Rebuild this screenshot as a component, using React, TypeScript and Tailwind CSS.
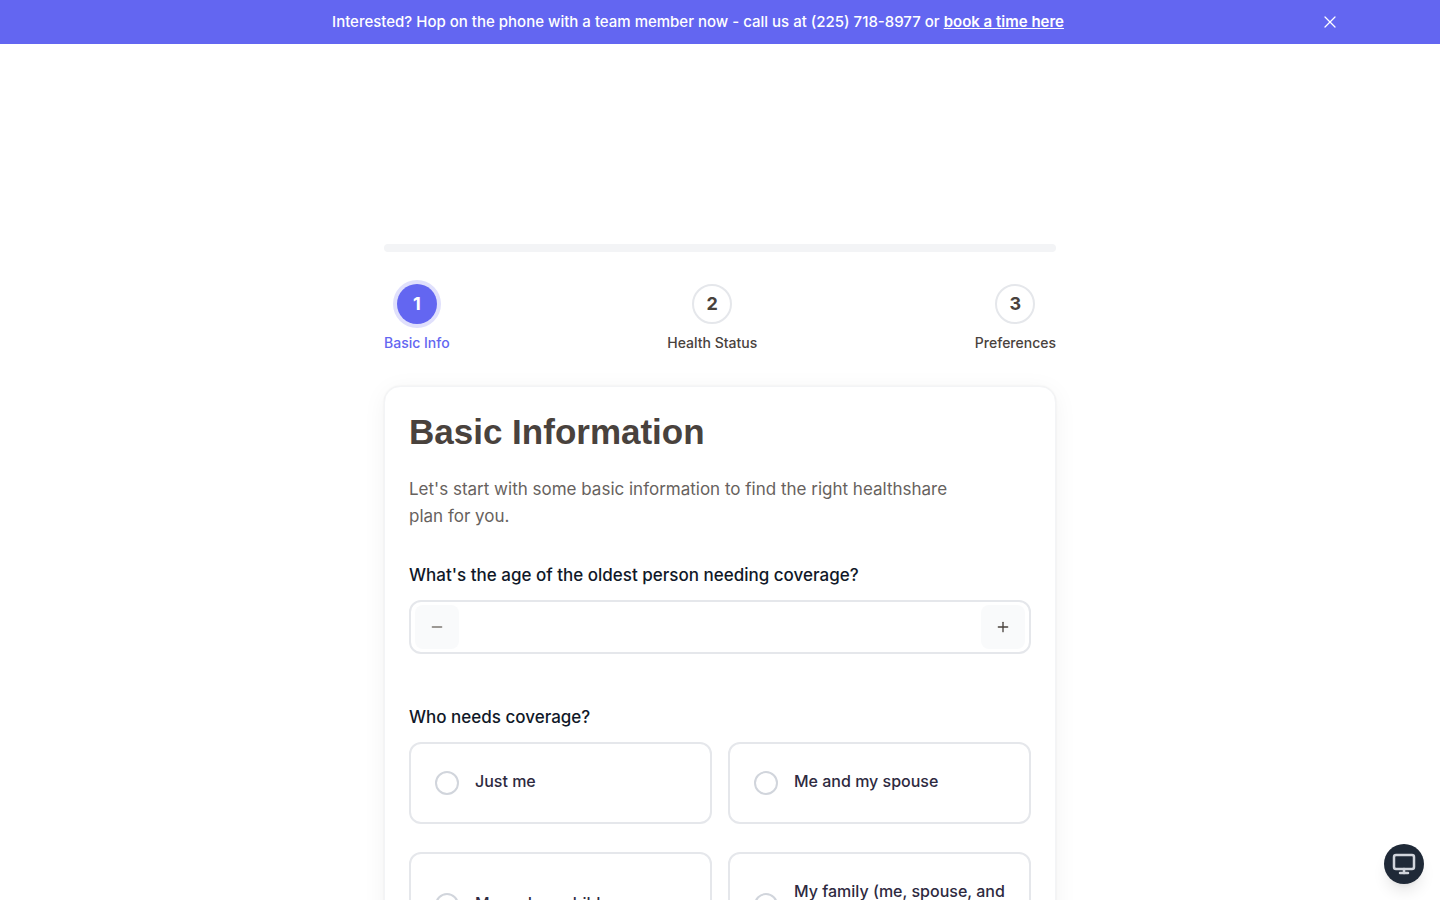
import { useState } from "react";
import { Minus, Plus, X, Monitor } from "lucide-react";

const steps = ["Basic Info", "Health Status", "Preferences"];

const coverageOptions = [
  "Just me",
  "Me and my spouse",
  "Me and my children",
  "My family (me, spouse, and children)",
];

function Banner({ onClose }: { onClose: () => void }) {
  return (
    <div className="flex h-11 items-center bg-[#6366f1] px-20 text-white">
      <p className="flex-1 text-center text-[15px] leading-6 font-medium">
        Interested? Hop on the phone with a team member now - call us at (225) 718-8977 or{" "}
        <a href="#book" className="font-semibold underline">
          book a time here
        </a>
      </p>
      <button type="button" aria-label="Dismiss" onClick={onClose} className="mr-4 p-1">
        <X size={20} strokeWidth={1.5} />
      </button>
    </div>
  );
}

function Stepper({ current }: { current: number }) {
  return (
    <>
      <div className="h-2 rounded-full bg-gray-100" />
      <ol className="mt-8 flex justify-between">
        {steps.map((name, i) => (
          <li key={name} className="flex flex-col items-center gap-2">
            <span
              className={
                i === current
                  ? "flex size-10 items-center justify-center rounded-full bg-[#6366f1] text-lg font-bold text-white ring-4 ring-[#e0e0fc]"
                  : "flex size-10 items-center justify-center rounded-full border-2 border-gray-200 bg-white text-lg font-bold text-[#49423d]"
              }
            >
              {i + 1}
            </span>
            <span
              className={
                i === current
                  ? "text-[14px] leading-[22px] font-medium text-[#6366f1]"
                  : "text-[14px] leading-[22px] font-medium text-[#49423d]"
              }
            >
              {name}
            </span>
          </li>
        ))}
      </ol>
    </>
  );
}

function AgeField() {
  const [age, setAge] = useState("");
  const step = (delta: number) => setAge(String(Math.max(0, Number(age) + delta)));
  const buttonClass =
    "flex size-11 shrink-0 items-center justify-center rounded-lg bg-gray-50 text-[#49423d] disabled:text-[#7d7873]";
  return (
    <div>
      <label htmlFor="age" className="block text-[17px] leading-7 font-medium text-gray-900">
        What's the age of the oldest person needing coverage?
      </label>
      <div className="mt-[11px] flex h-[54px] items-center rounded-xl border-2 border-gray-200 px-1">
        <button
          type="button"
          aria-label="Decrease age"
          disabled={!age}
          onClick={() => step(-1)}
          className={buttonClass}
        >
          <Minus size={16} strokeWidth={2} />
        </button>
        <input
          id="age"
          inputMode="numeric"
          value={age}
          onChange={(e) => setAge(e.target.value)}
          className="h-full min-w-0 flex-1 text-center text-lg outline-none"
        />
        <button type="button" aria-label="Increase age" onClick={() => step(1)} className={buttonClass}>
          <Plus size={16} strokeWidth={2} />
        </button>
      </div>
    </div>
  );
}

function CoverageField() {
  return (
    <fieldset className="mt-[49px]">
      <legend className="text-[17px] leading-7 font-medium text-gray-900">Who needs coverage?</legend>
      <div className="mt-[11px] grid grid-cols-2 gap-x-4 gap-y-7">
        {coverageOptions.map((option) => (
          <label
            key={option}
            className="flex cursor-pointer items-center gap-4 rounded-xl border-2 border-gray-200 px-6 py-6"
          >
            <input
              type="radio"
              name="coverage"
              value={option}
              className="size-6 shrink-0 appearance-none rounded-full border-2 border-gray-300 bg-white checked:border-8 checked:border-[#6366f1]"
            />
            <span className="pt-px pb-[5px] text-[16px] leading-6 font-medium text-[#2e2a3f]">
              {option}
            </span>
          </label>
        ))}
      </div>
    </fieldset>
  );
}

export default function App() {
  const [bannerOpen, setBannerOpen] = useState(true);
  return (
    <div className="min-h-screen bg-white font-['Inter',sans-serif]">
      {bannerOpen && <Banner onClose={() => setBannerOpen(false)} />}
      <main className="mx-auto max-w-2xl pt-50 pb-12">
        <Stepper current={0} />
        <section className="mt-8 rounded-2xl border border-gray-100 bg-white p-6 shadow-[0_0_2px_rgba(0,0,0,0.08),0_4px_24px_rgba(0,0,0,0.05)]">
          <h1 className="font-['Liberation_Sans',sans-serif] text-[35px] leading-[42px] font-bold text-[#49423d]">
            Basic Information
          </h1>
          <p className="mt-[23px] mb-[31px] max-w-xl text-[17px] leading-[27px] text-[#67625e]">
            Let's start with some basic information to find the right healthshare plan for you.
          </p>
          <AgeField />
          <CoverageField />
        </section>
      </main>
      <button
        type="button"
        aria-label="Open display options"
        className="fixed right-4 bottom-4 flex size-10 items-center justify-center rounded-full bg-[#1f2937] text-gray-300 shadow-lg"
      >
        <Monitor size={24} strokeWidth={2.5} />
      </button>
    </div>
  );
}
